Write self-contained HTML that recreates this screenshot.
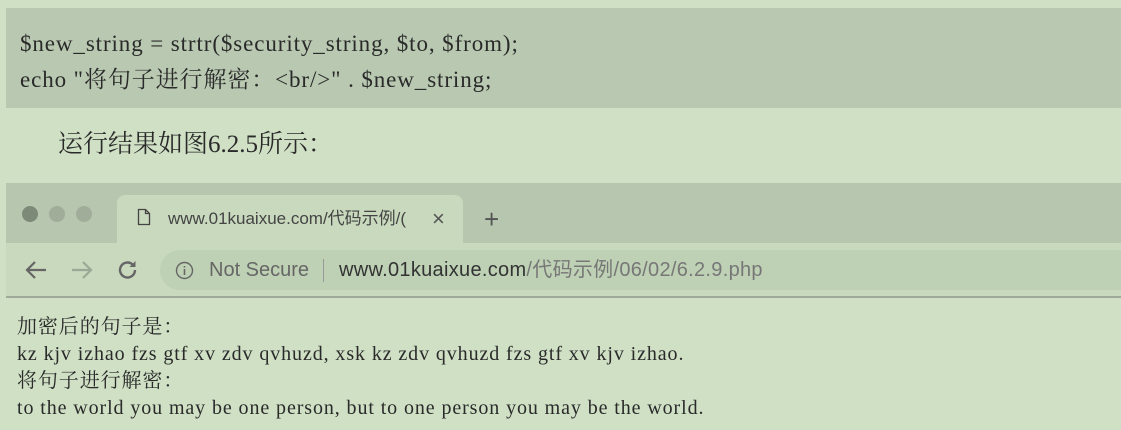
<!DOCTYPE html>
<html><head><meta charset="utf-8"><style>
body{margin:0;width:1121px;height:430px;background:#cfe0c5;position:relative;overflow:hidden;font-family:"Liberation Serif","Noto Serif CJK SC",serif;color:#2a2a2a}
.a{position:absolute;white-space:nowrap}
.code{position:absolute;left:6px;top:8px;width:1115px;height:100px;background:#b9c9b1}
.tabbar{position:absolute;left:6px;top:183px;width:1115px;height:60px;background:#b7c6ae}
.dot{position:absolute;top:206px;width:16px;height:16px;border-radius:50%}
.tab{position:absolute;left:117px;top:195px;width:346px;height:48px;background:#c8d9bd;border-radius:8px 8px 0 0}
.addr{position:absolute;left:6px;top:243px;width:1115px;height:53px;background:#c8d9bd;border-bottom:2px solid #9faa98}
.pill{position:absolute;left:160px;top:250px;width:961px;height:40px;background:#bed1b4;border-radius:20px 0 0 20px}
.sans{font-family:"Liberation Sans","Noto Sans CJK SC",sans-serif}
</style></head><body>
<div class="code"></div>
<div class="a" style="left:20px;top:29px;font-size:23px;letter-spacing:0.9px;line-height:30px">$new_string = strtr($security_string, $to, $from);</div>
<div class="a" style="left:20px;top:65px;font-size:23px;letter-spacing:0.9px;line-height:30px">echo "将句子进行解密：&lt;br/&gt;" . $new_string;</div>
<div class="a" style="left:58px;top:130px;font-size:25px;line-height:30px">运行结果如图6.2.5所示：</div>
<div class="tabbar"></div>
<div class="dot" style="left:22px;background:#7d8a78"></div>
<div class="dot" style="left:49px;background:#a0ad99"></div>
<div class="dot" style="left:76px;background:#a0ad99"></div>
<div class="tab"></div>
<svg class="a" style="left:137px;top:208px" width="14" height="18" viewBox="0 0 14 18"><path d="M1.5 1.5h7l4 4v11h-11z M8.5 1.5v4h4" fill="none" stroke="#444" stroke-width="1.3"/></svg>
<div class="a sans" style="left:168px;top:208px;font-size:17px;line-height:22px;color:#444">www.01kuaixue.com/代码示例/(</div>
<div class="a sans" style="left:432px;top:206px;font-size:22px;line-height:26px;color:#555">×</div>
<div class="a sans" style="left:484px;top:204px;font-size:26px;line-height:30px;color:#555">+</div>
<div class="addr"></div>
<div class="pill"></div>
<svg class="a" style="left:24px;top:259px" width="24" height="22" viewBox="0 0 24 22"><path d="M22 11H3M11 3l-8 8 8 8" fill="none" stroke="#666" stroke-width="2.2"/></svg>
<svg class="a" style="left:70px;top:259px" width="24" height="22" viewBox="0 0 24 22"><path d="M2 11h19M13 3l8 8-8 8" fill="none" stroke="#9aa895" stroke-width="2.2"/></svg>
<svg class="a" style="left:116px;top:258px" width="24" height="24" viewBox="0 0 24 24"><path d="M19 12a7.5 7.5 0 1 1-2.2-5.3" fill="none" stroke="#666" stroke-width="2.4"/><path d="M19.5 3v6h-6z" fill="#666"/></svg>
<svg class="a" style="left:175px;top:261px" width="19" height="19" viewBox="0 0 19 19"><circle cx="9.5" cy="9.5" r="8" fill="none" stroke="#666" stroke-width="1.4"/><path d="M9.5 8v6M9.5 5v1.5" stroke="#666" stroke-width="1.6"/></svg>
<div class="a sans" style="left:209px;top:258px;font-size:20px;line-height:24px;color:#666">Not Secure</div>
<div class="a" style="left:323px;top:259px;width:1px;height:23px;background:#999"></div>
<div class="a sans" style="left:339px;top:258px;font-size:20px;line-height:24px;color:#333;letter-spacing:0.3px">www.01kuaixue.com<span style="color:#777">/代码示例/06/02/6.2.9.php</span></div>
<div class="a" style="left:17px;top:314px;font-size:20px;line-height:27px;letter-spacing:0.9px">加密后的句子是：<br>kz kjv izhao fzs gtf xv zdv qvhuzd, xsk kz zdv qvhuzd fzs gtf xv kjv izhao.<br>将句子进行解密：<br>to the world you may be one person, but to one person you may be the world.</div>
</body></html>
